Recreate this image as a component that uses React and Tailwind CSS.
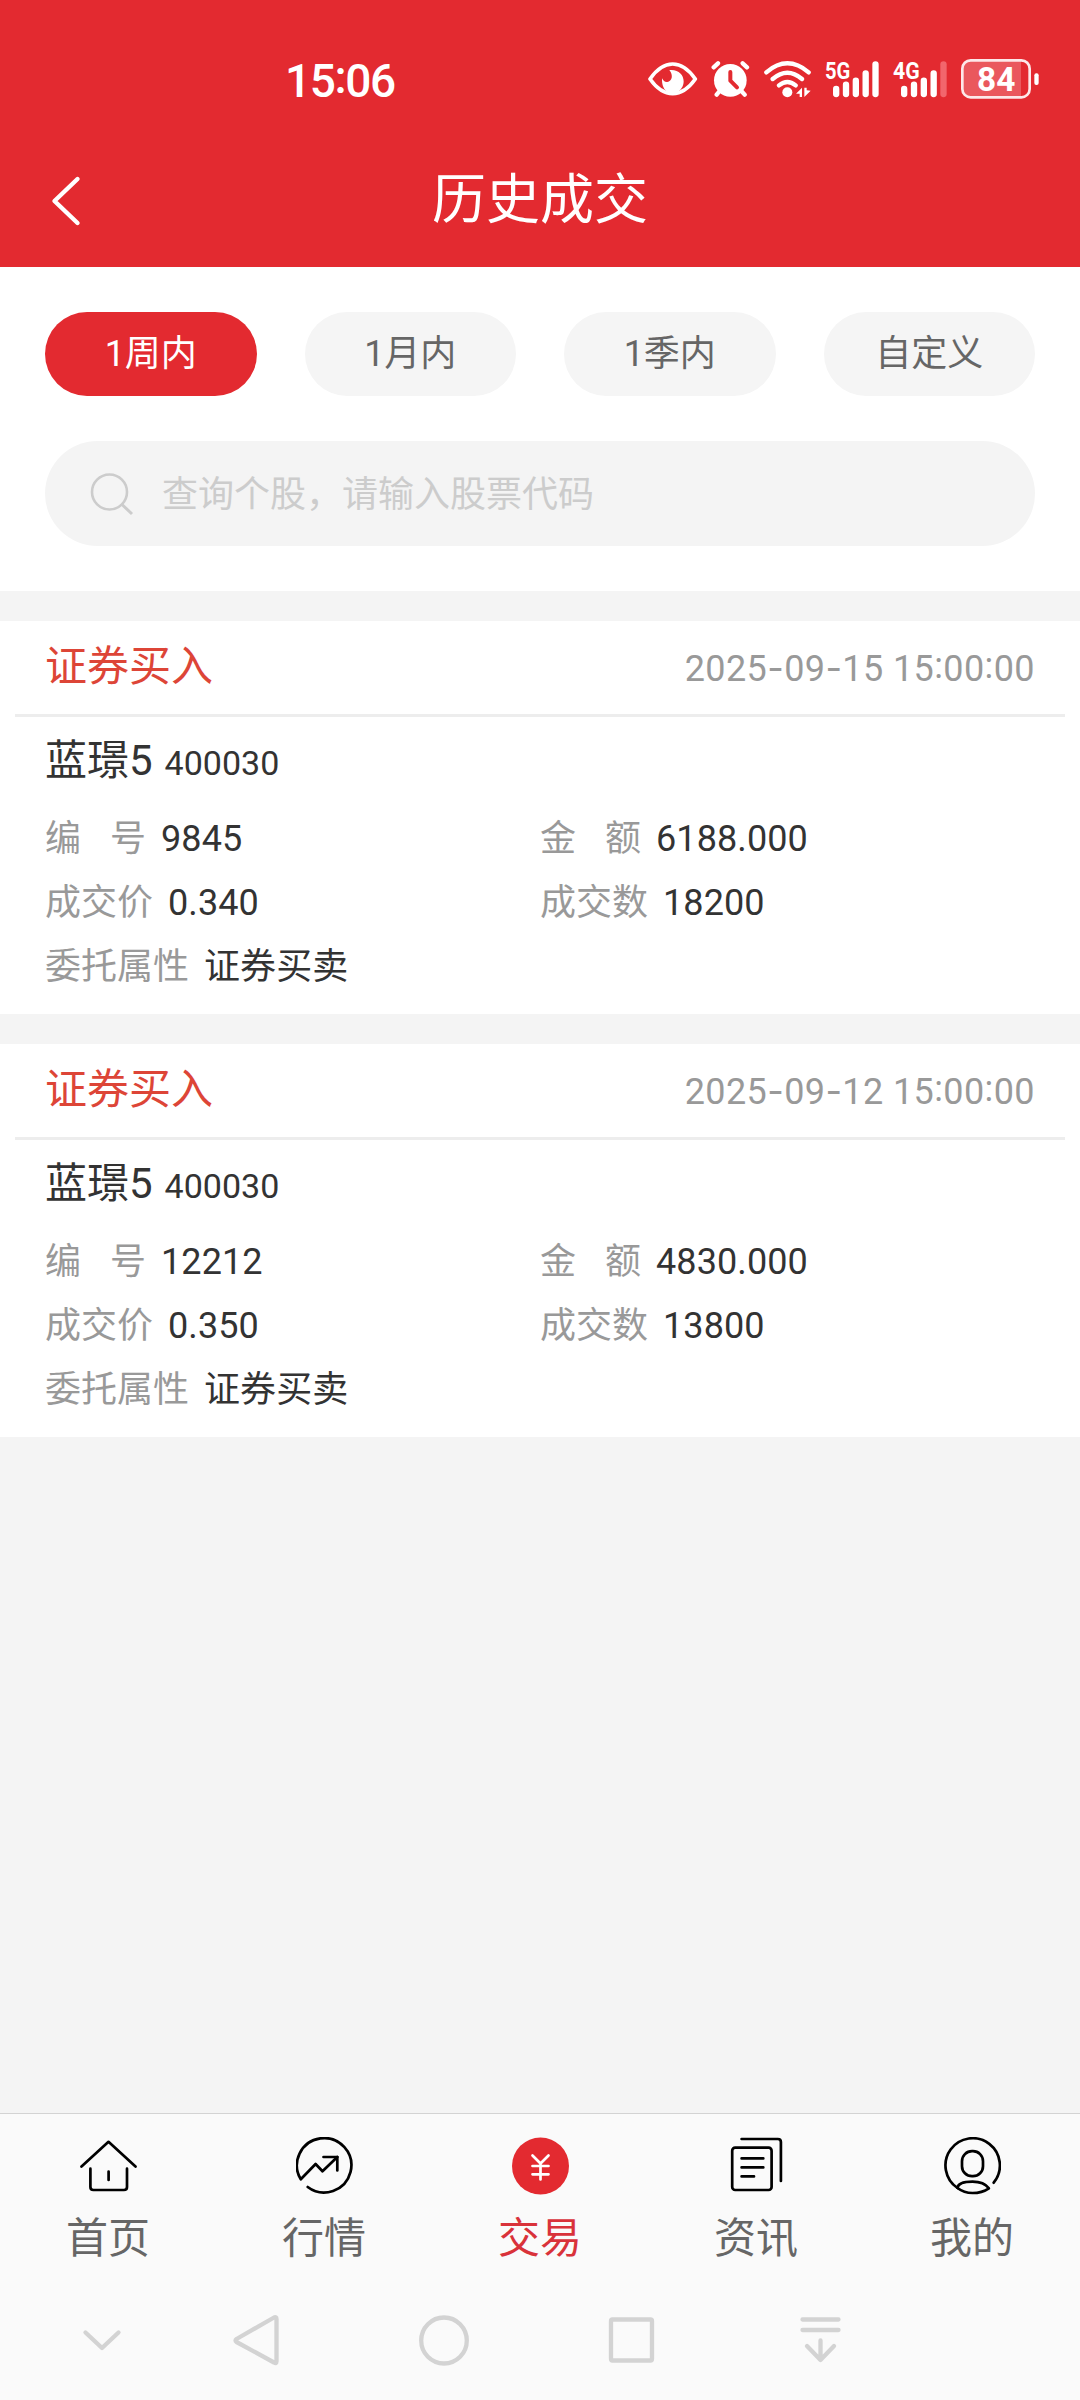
const RANGES = ["1周内", "1月内", "1季内", "自定义"];

const TRADES = [
    { type: "证券买入", time: "2025-09-15 15:00:00", name: "蓝璟5", code: "400030", no: "9845", amount: "6188.000", price: "0.340", count: "18200", attr: "证券买卖" },
    { type: "证券买入", time: "2025-09-12 15:00:00", name: "蓝璟5", code: "400030", no: "12212", amount: "4830.000", price: "0.350", count: "13800", attr: "证券买卖" },
];

function StatusBar() {
    return (
        <div className="flex h-[135px] items-center pt-[23px]">
            <div className="ml-[285px] w-[363px] pt-[3px] text-[46px] leading-none font-medium tracking-[-1.4px]">
                15<span className="relative -top-[4px]">:</span>06
            </div>
            {/* Eye comfort */}
            <svg className="h-[42px] w-[50px]" viewBox="144 84 150 126" fill="none">
                <path d="M150 147Q181 102 218 102Q255 102 286 147Q255 191 218 191Q181 191 150 147Z" stroke="#fff" strokeWidth="11" strokeLinejoin="round" />
                <path d="M208 120C235 117 251 134 251 154C251 170 241 182 232 187H204C192 180 185 166 186 145C190 153 195 157 202 156C216 154 221 136 208 120Z" fill="#fff" />
            </svg>
            {/* Alarm */}
            <svg className="ml-[13px] h-[42px] w-[39px]" viewBox="333 84 117 126" fill="none">
                <circle cx="391" cy="151" r="49" fill="#fff" />
                <path d="M341 112L354 100M441 112L428 100M359 183L350 194M424 183L434 194" stroke="#fff" strokeWidth="13" strokeLinecap="round" />
                <path d="M391 126V152L411 172" stroke="#e32a30" strokeWidth="12" strokeLinecap="round" strokeLinejoin="round" />
            </svg>
            {/* Wifi */}
            <svg className="ml-[13px] h-[42px] w-[48px]" viewBox="489 84 144 126" fill="none">
                <path d="M499 127Q562 73 626 127M518 147Q562 110 606 147M537 166Q562 146 587 166" stroke="#fff" strokeWidth="13" strokeLinecap="round" />
                <circle cx="562" cy="187" r="15" fill="#fff" />
                <path d="M588 191L606 173V201H599V191ZM613 173H620V181L632 182L613 201Z" fill="#fff" />
            </svg>
            {/* Signals */}
            <svg className="ml-[13px] h-[42px] w-[56px]" viewBox="672 84 168 126">
                <text x="675" y="146" fill="#fff" fontSize="72" fontWeight="700" fontFamily="Roboto" textLength="76" lengthAdjust="spacingAndGlyphs">5G</text>
                <path d="M708.5 177V192M738 164V192M767.5 152V192M797 130V192M826.500 103V192" stroke="#fff" strokeWidth="19" strokeLinecap="round" />
            </svg>
            <svg className="ml-[12px] h-[42px] w-[56px]" viewBox="876 84 168 126">
                <text x="879" y="146" fill="#fff" fontSize="72" fontWeight="700" fontFamily="Roboto" textLength="80" lengthAdjust="spacingAndGlyphs">4G</text>
                <path d="M912.5 177V192M942 164V192M971.5 152V192M1001 130V192" stroke="#fff" strokeWidth="19" strokeLinecap="round" />
                <path d="M1030.5 103V192" stroke="#f2666c" strokeWidth="19" strokeLinecap="round" />
            </svg>
            {/* Battery */}
            <svg className="ml-[12px] h-[42px] w-[80px]" viewBox="1080 84 240 126" fill="none">
                <path d="M1112 91H1263V202H1112Q1087 202 1087 177V116Q1087 91 1112 91Z" fill="#ea585d" />
                <rect x="1087" y="91" width="202" height="111" rx="25" stroke="#fde8e9" strokeWidth="8" />
                <rect x="1303" y="130" width="13" height="35" rx="6" fill="#fff" />
                <text x="1131" y="184" fill="#fff" fontSize="102" fontWeight="700" fontFamily="Roboto" textLength="115" lengthAdjust="spacingAndGlyphs">84</text>
            </svg>
        </div>
    );
}

function Header() {
    return (
        <header className="h-[267px] bg-[#e32a30] text-white">
            <StatusBar />
            <div className="flex h-[132px] items-center">
                <svg className="ml-[49px] h-[54px] w-[34px]" viewBox="0 0 34 54" fill="none">
                    <path d="M28.500 5L5.500 27L28.500 49" stroke="currentColor" strokeWidth="4.400" strokeLinecap="round" strokeLinejoin="round" />
                </svg>
                <h1 className="mr-[83px] flex-1 pb-px text-center text-[54px] leading-[64px]">历史成交</h1>
            </div>
        </header>
    );
}

function Filters() {
    return (
        <section className="h-[324px] bg-white px-[45px] pt-[45px]">
            <div className="flex gap-12">
                {RANGES.map((label, i) => (
                    <button
                        key={label}
                        className={`h-[84px] flex-1 rounded-full text-[36px] leading-[82px] ${i === 0 ? "bg-[#e32a30] text-white" : "bg-[#f5f5f5] text-[#666]"}`}
                    >
                        {label}
                    </button>
                ))}
            </div>
            <div className="mt-[45px] flex h-[105px] items-center rounded-full bg-[#f4f4f4] pl-[45px] text-[#ccc]">
                <svg className="h-[44px] w-[44px]" viewBox="0 0 44 44" fill="none" stroke="currentColor" strokeWidth="2.600">
                    <circle cx="19.500" cy="20" r="17.500" />
                    <path d="M31.500 32L42 42" strokeWidth="3" />
                </svg>
                <span className="ml-[28px] pt-[2px] text-[36px] leading-[52px]">查询个股，请输入股票代码</span>
            </div>
        </section>
    );
}

// Separators sit at mid-height of the digits and the dash is wider than the font's own
function Timestamp({ value }) {
    return (
        <span className="text-[36px] tracking-[0.4px] text-[#999]">
            {value.split(/([-:])/).map((part, i) => {
                if (part === "-") return <span key={i} className="font-[Inter]">-</span>;
                if (part === ":") return <span key={i} className="relative -top-[3px]">:</span>;
                return part;
            })}
        </span>
    );
}

function Field({ label, value }) {
    return (
        <div className="flex h-16 w-1/2 items-center pt-[2px] text-[36px] leading-[64px]">
            {label.length === 2 ? (
                <span className="flex gap-[29px] text-[#999]">
                    <span>{label[0]}</span>
                    <span>{label[1]}</span>
                </span>
            ) : (
                <span className="text-[#999]">{label}</span>
            )}
            <span className="ml-[15px] tracking-[0.1px] text-[#333]">{value}</span>
        </div>
    );
}

function TradeCard({ trade }) {
    return (
        <article className="mt-[30px] h-[393px] bg-white">
            <div className="mx-[15px] flex h-24 items-center justify-between border-b-[3px] border-[#ededed] px-[30px] pt-[2px]">
                <span className="pb-[3px] text-[42px] leading-[60px] text-[#dd4537]">{trade.type}</span>
                <Timestamp value={trade.time} />
            </div>
            <div className="px-[45px]">
                <div className="flex h-[89px] items-baseline pt-[14px] text-[#333]">
                    <span className="text-[42px] leading-[60px]">{trade.name}</span>
                    <span className="ml-[12px] text-[34px] leading-[60px]">{trade.code}</span>
                </div>
                <div className="flex flex-wrap">
                    <Field label="编号" value={trade.no} />
                    <Field label="金额" value={trade.amount} />
                    <Field label="成交价" value={trade.price} />
                    <Field label="成交数" value={trade.count} />
                    <Field label="委托属性" value={trade.attr} />
                </div>
            </div>
        </article>
    );
}

const TABS = [
    {
        label: "首页",
        icon: <path d="M1.500 29.500L28.500 4.800L55.500 29.500M10.400 31.700V50Q10.400 53 13.400 53H44Q47 53 47 50V31.700M28.600 34.500V43" />,
    },
    {
        label: "行情",
        icon: (
            <>
                <path d="M11.700 50A27.200 27.200 0 1 0 4.800 42.300L19.600 27L26.500 34.300L41.300 20" />
                <path d="M27.500 20H41.300V33.500" />
            </>
        ),
    },
    {
        label: "交易",
        active: true,
        icon: (
            <>
                <circle cx="28.500" cy="29" r="28.500" fill="#e32a30" stroke="none" />
                <path d="M20.500 18.500L28.500 26.500L36.500 18.500M20.500 29H36.500M20.500 37.300H36.500M28.500 26.500V42.500" stroke="#fff" />
            </>
        ),
    },
    {
        label: "资讯",
        icon: (
            <>
                <rect x="4.200" y="10.700" width="39.400" height="42.300" rx="3" />
                <path d="M13.600 2H49.900Q52.900 2 52.900 5V44M13.600 21.400H35.300M13.600 30.400H35.300M13.600 39.400H26" />
            </>
        ),
    },
    {
        label: "我的",
        icon: (
            <>
                <path d="M49.700 45.700A27.200 27.200 0 1 0 13.500 51" />
                <path d="M13.500 51Q14 44.600 28.500 44.600Q40 44.600 44.900 51.300Q38 56 28.500 56Q20 56 13.500 51Z" />
                <rect x="18" y="14.200" width="21" height="25" rx="10" />
            </>
        ),
    },
];

function TabBar() {
    return (
        <nav className="flex h-[171px] border-t border-[#d3d3d3] pt-[23px]">
            {TABS.map((tab) => (
                <div key={tab.label} className="flex flex-1 flex-col items-center">
                    <svg
                        className="h-[58px] w-[57px]"
                        viewBox="0 0 57 58"
                        fill="none"
                        stroke="#000"
                        strokeWidth="2.700"
                        strokeLinecap="round"
                        strokeLinejoin="round"
                    >
                        {tab.icon}
                    </svg>
                    <span className={`mt-[14px] text-[42px] leading-[60px] ${tab.active ? "text-[#d9323a]" : "text-[#666]"}`}>
                        {tab.label}
                    </span>
                </div>
            ))}
        </nav>
    );
}

// System navigation keys, each drawn in a 52px box
const KEYS = [
    <path d="M9.500 18.500L26 34L42.500 18.500" />,
    <path d="M7.500 25L45 3.500Q47.500 2.500 47.500 5V47.500Q47.500 50 45 48.500L7.500 28Q5.500 26.500 7.500 25Z" />,
    <ellipse cx="26" cy="26.500" rx="22.800" ry="23" />,
    <rect x="5" y="5.500" width="41" height="41" rx="1.500" />,
    <path d="M7.500 5.500H43.500M7.500 16H43.500M25.500 26.500V46M12 32L25.500 46L39 32" />,
];

function SystemKeys() {
    return (
        <div className="flex h-[116px] pl-[43px] pt-[30px]">
            {KEYS.map((shape, i) => (
                <div key={i} className={`flex justify-center ${i === 0 ? "w-[118px]" : "w-[188.500px]"}`}>
                    <svg
                        className="h-[52px] w-[52px]"
                        viewBox="0 0 52 52"
                        fill="none"
                        stroke="#d3d3d3"
                        strokeWidth="4.300"
                        strokeLinecap="round"
                        strokeLinejoin="round"
                    >
                        {shape}
                    </svg>
                </div>
            ))}
        </div>
    );
}

export default function App() {
    return (
        <div className="flex h-[2400px] w-[1080px] flex-col bg-[#f4f4f4] font-[Roboto,'Noto_Sans_CJK_SC',sans-serif]">
            <Header />
            <Filters />
            <main className="flex-1">
                {TRADES.map((trade) => (
                    <TradeCard key={trade.time} trade={trade} />
                ))}
            </main>
            <footer className="bg-[#fafafa]">
                <TabBar />
                <SystemKeys />
            </footer>
        </div>
    );
}
